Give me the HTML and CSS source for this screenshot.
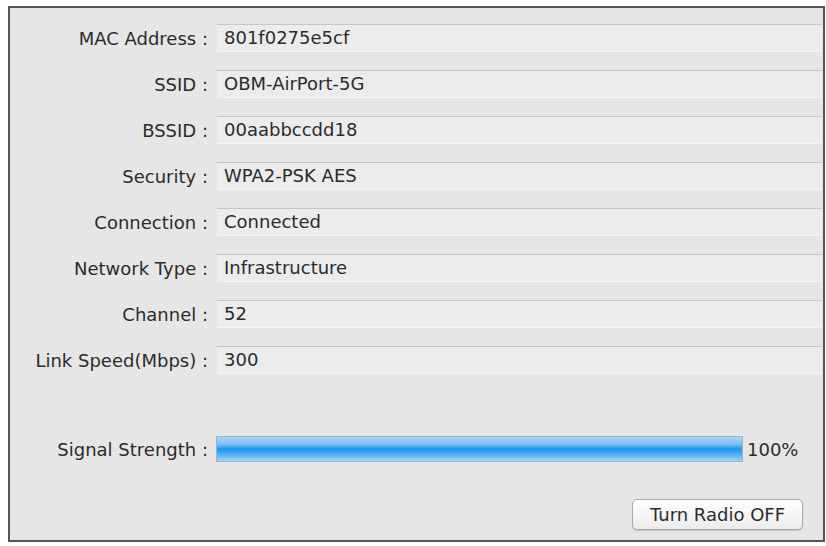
FILE: index.html
```html
<!DOCTYPE html>
<html lang="en">
<head>
    <meta charset="UTF-8">
    <title>Link Status</title>
    <link rel="stylesheet" href="styles.css">
</head>
<body>
    <div class="panel">
        <div class="info">
            <div class="label">MAC Address :</div>
            <div class="field">801f0275e5cf</div>

            <div class="label">SSID :</div>
            <div class="field">OBM-AirPort-5G</div>

            <div class="label">BSSID :</div>
            <div class="field">00aabbccdd18</div>

            <div class="label">Security :</div>
            <div class="field">WPA2-PSK AES</div>

            <div class="label">Connection :</div>
            <div class="field">Connected</div>

            <div class="label">Network Type :</div>
            <div class="field">Infrastructure</div>

            <div class="label">Channel :</div>
            <div class="field">52</div>

            <div class="label">Link Speed(Mbps) :</div>
            <div class="field">300</div>
        </div>

        <div class="signal">
            <div class="label">Signal Strength :</div>
            <div class="meter">
                <div class="bar"><div class="fill" style="width: 100%"></div></div>
                <span class="percent">100%</span>
            </div>
        </div>

        <div class="actions">
            <button class="radio-btn">Turn Radio OFF</button>
        </div>
    </div>
</body>
</html>
```

FILE: styles.css
```css
body {
    margin: 0;
    padding: 0;
    background-color: #fff;
    font-family: "DejaVu Sans", Verdana, sans-serif;
    font-size: 18px;
    color: #2b2b2b;
}

.panel {
    margin: 6px 0 0 8px;
    width: 813px;
    height: 516px;
    border: 2px solid #555;
    background-color: #e6e6e6;
    padding-top: 16px;
    box-sizing: content-box;
}

.info,
.signal {
    display: grid;
    grid-template-columns: 198px 1fr;
    column-gap: 9px;
    align-items: center;
}

.info {
    row-gap: 18px;
    padding-right: 1px;
}

.label {
    text-align: right;
    white-space: nowrap;
}

.field {
    height: 28px;
    line-height: 26px;
    padding-left: 7px;
    background-color: #ececec;
    border-top: 1px solid #c6c6c6;
    border-bottom: 1px solid #f4f4f4;
    box-sizing: border-box;
}

.signal {
    margin-top: 62px;
    column-gap: 8px;
}

.meter {
    display: flex;
    align-items: center;
}

.bar {
    width: 527px;
    height: 26px;
    border: 1px solid #9cb3c6;
    box-sizing: border-box;
    background-color: #ddd;
}

.fill {
    height: 100%;
    background: linear-gradient(to bottom, #a9d6f7 0%, #7cc0f3 30%, #1a98ee 50%, #46acf2 70%, #a6d5f6 100%);
}

.percent {
    margin-left: 4px;
}

/* bottom-right button row */
.actions {
    display: flex;
    justify-content: flex-end;
    padding-right: 20px;
    margin-top: 37px;
}

.radio-btn {
    font-family: "DejaVu Sans", Verdana, sans-serif;
    font-size: 18px;
    color: #2b2b2b;
    width: 171px;
    height: 31px;
    padding: 0;
    border: 1px solid #a8a8a8;
    border-radius: 5px;
    background: linear-gradient(to bottom, #ffffff 0%, #f4f4f4 60%, #ececec 100%);
    box-shadow: 0 1px 1px rgba(0, 0, 0, 0.15);
}
```
